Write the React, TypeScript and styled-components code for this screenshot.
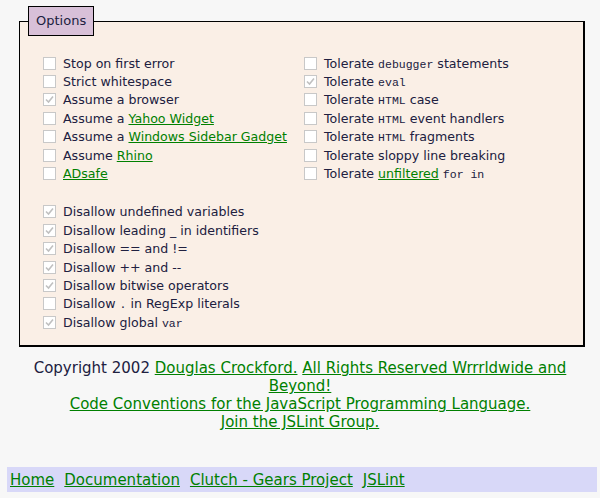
import React from 'react';
import styled, { createGlobalStyle } from 'styled-components';

const GlobalStyle = createGlobalStyle`
  body {
    margin: 0;
    background-color: #f7f7f7;
    font-family: "DejaVu Sans", Verdana, sans-serif;
    color: #202040;
  }
`;

const Page = styled.div`
  padding: 6px 8px 6px 8px;
`;

const Fieldset = styled.fieldset`
  margin: 0 7px 0 11px;
  padding: 18px 0 14px 23px;
  background-color: #faefe6;
  border: 1px solid #000;
  border-right-width: 2px;
  border-bottom-width: 2px;
`;

const Legend = styled.legend`
  margin-left: -15px;
  padding: 6px 7px 7px;
  background-color: #d8c0d8;
  border: 1px solid #000;
  font-size: 13px;
`;

const Columns = styled.div`
  display: grid;
  grid-template-columns: 261px 1fr;
`;

const Column = styled.div`
  display: flex;
  flex-direction: column;
`;

const Gap = styled.div`
  height: 20px;
`;

const Row = styled.label`
  display: flex;
  align-items: center;
  gap: 7px;
  height: 18.4px;
  font-size: 12.6px;
  white-space: nowrap;
`;

const Box = styled.span`
  width: 11px;
  height: 11px;
  border: 1px solid #c8c8c8;
  background: #fff;
  display: inline-flex;
  align-items: center;
  justify-content: center;
  flex-shrink: 0;
`;

const Code = styled.code`
  font-family: "Liberation Mono", monospace;
  font-size: 11.5px;
`;

const Link = styled.a`
  color: #008000;
  text-decoration: underline;
`;

const Footer = styled.div`
  margin-top: 12px;
  text-align: center;
  font-size: 15px;
  line-height: 18px;
  padding: 0 24px;
`;

const NavBar = styled.nav`
  margin: 36px -5px 0 -1px;
  height: 25px;
  background-color: #d8d8f8;
  display: flex;
  align-items: center;
  gap: 10px;
  padding: 0 3px;
  font-size: 15px;
`;

const Check = ({ on }: { on?: boolean }) => (
  <Box>
    {on && (
      <svg width="9" height="9" viewBox="0 0 9 9">
        <path d="M1 4.5 L3.5 7 L8 1.5" stroke="#c0c0c0" strokeWidth="1.6" fill="none" />
      </svg>
    )}
  </Box>
);

const Option = ({ on, children }: { on?: boolean; children: React.ReactNode }) => (
  <Row>
    <Check on={on} />
    <span>{children}</span>
  </Row>
);

const App: React.FC = () => (
  <Page>
    <GlobalStyle />
    <Fieldset>
      <Legend>Options</Legend>
      <Columns>
        <Column>
          <Option>Stop on first error</Option>
          <Option>Strict whitespace</Option>
          <Option on>Assume a browser</Option>
          <Option>Assume a <Link href="#">Yahoo Widget</Link></Option>
          <Option>Assume a <Link href="#">Windows Sidebar Gadget</Link></Option>
          <Option>Assume <Link href="#">Rhino</Link></Option>
          <Option><Link href="#">ADsafe</Link></Option>
          <Gap />
          <Option on>Disallow undefined variables</Option>
          <Option on>Disallow leading _ in identifiers</Option>
          <Option on>Disallow == and !=</Option>
          <Option on>Disallow ++ and --</Option>
          <Option on>Disallow bitwise operators</Option>
          <Option>Disallow <Code>.</Code> in RegExp literals</Option>
          <Option on>Disallow global <Code>var</Code></Option>
        </Column>
        <Column>
          <Option>Tolerate <Code>debugger</Code> statements</Option>
          <Option on>Tolerate <Code>eval</Code></Option>
          <Option>Tolerate <Code>HTML</Code> case</Option>
          <Option>Tolerate <Code>HTML</Code> event handlers</Option>
          <Option>Tolerate <Code>HTML</Code> fragments</Option>
          <Option>Tolerate sloppy line breaking</Option>
          <Option>Tolerate <Link href="#">unfiltered</Link> <Code>for in</Code></Option>
        </Column>
      </Columns>
    </Fieldset>
    <Footer>
      Copyright 2002 <Link href="#">Douglas Crockford.</Link>{' '}
      <Link href="#">All Rights Reserved Wrrrldwide and Beyond!</Link>
      <br />
      <Link href="#">Code Conventions for the JavaScript Programming Language.</Link>
      <br />
      <Link href="#">Join the JSLint Group.</Link>
    </Footer>
    <NavBar>
      <Link href="#">Home</Link>
      <Link href="#">Documentation</Link>
      <Link href="#">Clutch - Gears Project</Link>
      <Link href="#">JSLint</Link>
    </NavBar>
  </Page>
);

export default App;
